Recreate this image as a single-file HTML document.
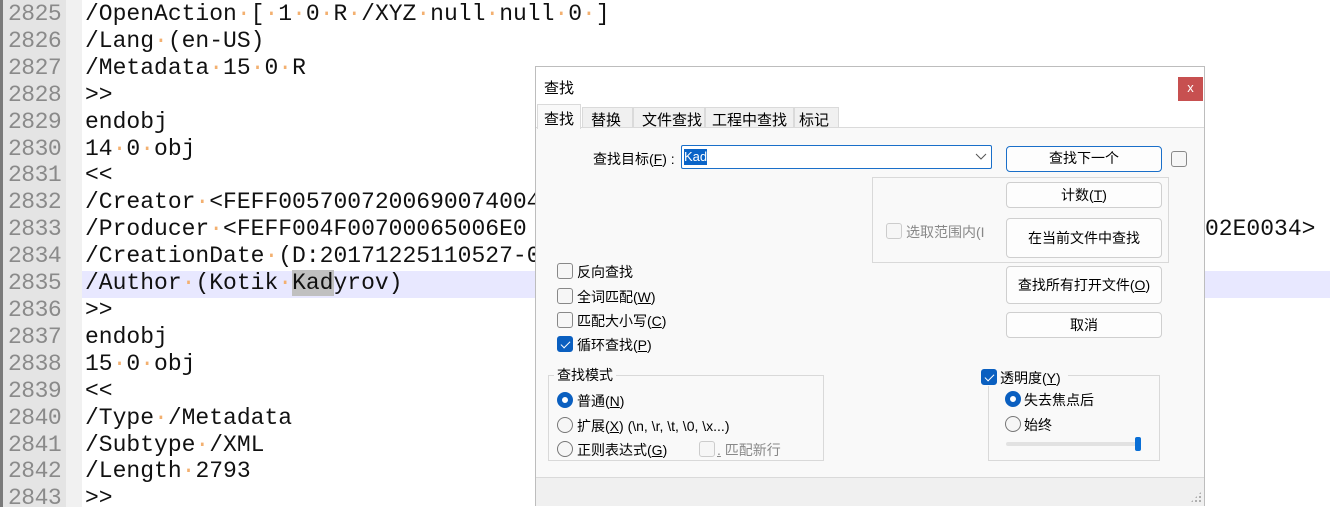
<!DOCTYPE html>
<html><head><meta charset="utf-8"><style>
*{margin:0;padding:0;box-sizing:border-box}
body{width:1330px;height:507px;overflow:hidden;background:#fff;position:relative;font-family:"Liberation Sans","Noto Sans CJK SC",sans-serif}
.gut{position:absolute;left:0;top:0;width:66px;height:507px;background:#e4e4e4;border-left:3px solid #7a7a7a}
.fold{position:absolute;left:66px;top:0;width:16px;height:507px;background:#f1f1f1}
.hl{position:absolute;left:82px;top:271px;width:1248px;height:27px;background:#e8e8ff}
.code{position:absolute;left:0;top:1px;font-family:"Liberation Mono",monospace;font-size:23px;line-height:26.9px;white-space:pre;color:#111}
.code .n{display:inline-block;width:85px;padding-left:8px;color:#8a8a8a;letter-spacing:-0.5px}
.d{color:#f3b070}
.sel{background:#c0c0c0}
.dlg{position:absolute;left:535px;top:66px;width:670px;height:440px;background:#f9f9f9;border:1px solid #bdbdbd;font-size:14px;color:#000}
.a{position:absolute;white-space:nowrap}
.btn{position:absolute;background:#fdfdfd;border:1px solid #cfcfcf;border-radius:4px;text-align:center;font-size:14px}
.cb{position:absolute;width:16px;height:16px;border:1px solid #888;border-radius:3px;background:#f6f6f6}
.cb.on{background:#0a5fc0;border-color:#0a5fc0}
.cb.on::after{content:"";position:absolute;left:5px;top:2px;width:4px;height:8px;border:solid #fff;border-width:0 1.5px 1.5px 0;transform:rotate(45deg)}
.rd{position:absolute;width:16px;height:16px;border:1px solid #777;border-radius:50%;background:#f6f6f6}
.rd.on{border:5px solid #0a5fc0;background:#fff}
.grp{position:absolute;border:1px solid #d9d9d9}
u{text-decoration:underline}
</style></head><body>
<div class="gut"></div><div class="fold"></div><div class="hl"></div>
<div class="code"><span class="n">2825</span>/OpenAction<span class="d">·</span>[<span class="d">·</span>1<span class="d">·</span>0<span class="d">·</span>R<span class="d">·</span>/XYZ<span class="d">·</span>null<span class="d">·</span>null<span class="d">·</span>0<span class="d">·</span>]
<span class="n">2826</span>/Lang<span class="d">·</span>(en-US)
<span class="n">2827</span>/Metadata<span class="d">·</span>15<span class="d">·</span>0<span class="d">·</span>R
<span class="n">2828</span>&gt;&gt;
<span class="n">2829</span>endobj
<span class="n">2830</span>14<span class="d">·</span>0<span class="d">·</span>obj
<span class="n">2831</span>&lt;&lt;
<span class="n">2832</span>/Creator<span class="d">·</span>&lt;FEFF0057007200690074004
<span class="n">2833</span>/Producer<span class="d">·</span>&lt;FEFF004F00700065006E0
<span class="n">2834</span>/CreationDate<span class="d">·</span>(D:20171225110527-0
<span class="n">2835</span>/Author<span class="d">·</span>(Kotik<span class="d">·</span><span class="sel">Kad</span>yrov)
<span class="n">2836</span>&gt;&gt;
<span class="n">2837</span>endobj
<span class="n">2838</span>15<span class="d">·</span>0<span class="d">·</span>obj
<span class="n">2839</span>&lt;&lt;
<span class="n">2840</span>/Type<span class="d">·</span>/Metadata
<span class="n">2841</span>/Subtype<span class="d">·</span>/XML
<span class="n">2842</span>/Length<span class="d">·</span>2793
<span class="n">2843</span>&gt;&gt;</div>
<div class="code" style="left:1205px;top:216px">02E0034&gt;</div>

<div class="dlg">
 <div class="a" style="left:0;top:0;width:668px;height:37px;background:#fff"></div>
 <div class="a" style="left:8px;top:10px;font-size:15px">查找</div>
 <div class="a" style="left:642px;top:10px;width:25px;height:24px;background:#c75050;color:#fff;text-align:center;line-height:22px;font-size:13px">x</div>
 <div class="a" style="left:0;top:37px;width:668px;height:24px;background:#fff"></div>
 <div class="a" style="left:0;top:60px;width:668px;height:1px;background:#dadada"></div>
 <div class="a" style="left:1px;top:37px;width:44px;height:25px;background:#f9f9f9;border:1px solid #dadada;border-bottom:none;padding:3px 0 0 6px;font-size:15px">查找</div>
 <div class="a" style="left:46px;top:40px;width:51px;height:21px;background:#f0f0f0;border:1px solid #dadada;padding:1px 0 0 8px;font-size:15px">替换</div>
 <div class="a" style="left:97px;top:40px;width:72px;height:21px;background:#f0f0f0;border:1px solid #dadada;padding:1px 0 0 8px;font-size:15px">文件查找</div>
 <div class="a" style="left:169px;top:40px;width:89px;height:21px;background:#f0f0f0;border:1px solid #dadada;padding:1px 0 0 6px;font-size:15px">工程中查找</div>
 <div class="a" style="left:258px;top:40px;width:45px;height:21px;background:#f0f0f0;border:1px solid #dadada;padding:1px 0 0 4px;font-size:15px">标记</div>

 <div class="a" style="left:57px;top:82px">查找目标(<u>F</u>) :</div>
 <div class="a" style="left:145px;top:78px;width:311px;height:24px;background:#fff;border:1px solid #1a6fc9;border-radius:2px"></div>
 <div class="a" style="left:148px;top:82px;background:#0a64c8;color:#fff;font-size:13px;line-height:16px">Kad</div>
 <svg class="a" style="left:439px;top:86px" width="12" height="8"><path d="M1 1 L6 6 L11 1" fill="none" stroke="#555" stroke-width="1"/></svg>
 <div class="btn" style="left:470px;top:79px;width:156px;height:26px;border-color:#1a6fc9;line-height:23px">查找下一个</div>
 <div class="cb" style="left:635px;top:84px"></div>

 <div class="grp" style="left:336px;top:110px;width:297px;height:86px"></div>
 <div class="btn" style="left:470px;top:115px;width:156px;height:26px;line-height:24px">计数(<u>T</u>)</div>
 <div class="cb" style="left:350px;top:156px;border-color:#ccc"></div>
 <div class="a" style="left:370px;top:155px;color:#888">选取范围内(I</div>
 <div class="btn" style="left:470px;top:151px;width:156px;height:40px;line-height:38px">在当前文件中查找</div>

 <div class="cb" style="left:21px;top:196px"></div><div class="a" style="left:41px;top:195px">反向查找</div>
 <div class="cb" style="left:21px;top:221px"></div><div class="a" style="left:41px;top:220px">全词匹配(<u>W</u>)</div>
 <div class="cb" style="left:21px;top:245px"></div><div class="a" style="left:41px;top:244px">匹配大小写(<u>C</u>)</div>
 <div class="cb on" style="left:21px;top:269px"></div><div class="a" style="left:41px;top:268px">循环查找(<u>P</u>)</div>

 <div class="btn" style="left:470px;top:199px;width:156px;height:38px;line-height:36px">查找所有打开文件(<u>O</u>)</div>
 <div class="btn" style="left:470px;top:245px;width:156px;height:26px;line-height:24px">取消</div>

 <div class="grp" style="left:12px;top:308px;width:276px;height:86px"></div>
 <div class="a" style="left:18px;top:298px;background:#f9f9f9;padding:0 3px">查找模式</div>
 <div class="rd on" style="left:21px;top:325px"></div><div class="a" style="left:41px;top:324px">普通(<u>N</u>)</div>
 <div class="rd" style="left:21px;top:350px"></div><div class="a" style="left:41px;top:349px">扩展(<u>X</u>) (\n, \r, \t, \0, \x...)</div>
 <div class="rd" style="left:21px;top:374px"></div><div class="a" style="left:41px;top:373px">正则表达式(<u>G</u>)</div>
 <div class="cb" style="left:163px;top:374px;border-color:#ccc"></div><div class="a" style="left:181px;top:373px;color:#888"><u>.</u> 匹配新行</div>

 <div class="grp" style="left:452px;top:308px;width:172px;height:86px"></div>
 <div class="a" style="left:442px;top:299px;width:90px;height:20px;background:#f9f9f9"></div>
 <div class="cb on" style="left:445px;top:302px"></div><div class="a" style="left:464px;top:301px">透明度(<u>Y</u>)</div>
 <div class="rd on" style="left:469px;top:324px"></div><div class="a" style="left:488px;top:323px">失去焦点后</div>
 <div class="rd" style="left:469px;top:349px"></div><div class="a" style="left:488px;top:348px">始终</div>
 <div class="a" style="left:470px;top:375px;width:135px;height:4px;background:#e2e2e2;border-radius:2px"></div>
 <div class="a" style="left:599px;top:370px;width:6px;height:14px;background:#0a6fd6;border-radius:2px"></div>

 <div class="a" style="left:0;top:410px;width:668px;height:1px;background:#dadada"></div>
 <div class="a" style="left:0;top:411px;width:668px;height:28px;background:#f0f0f0"></div>
 <div class="a" style="left:654px;top:424px;width:12px;height:12px;background:radial-gradient(circle,#aaa 1px,transparent 1.2px) 0 0/4px 4px;clip-path:polygon(100% 0,100% 100%,0 100%)"></div>
</div>
</body></html>
